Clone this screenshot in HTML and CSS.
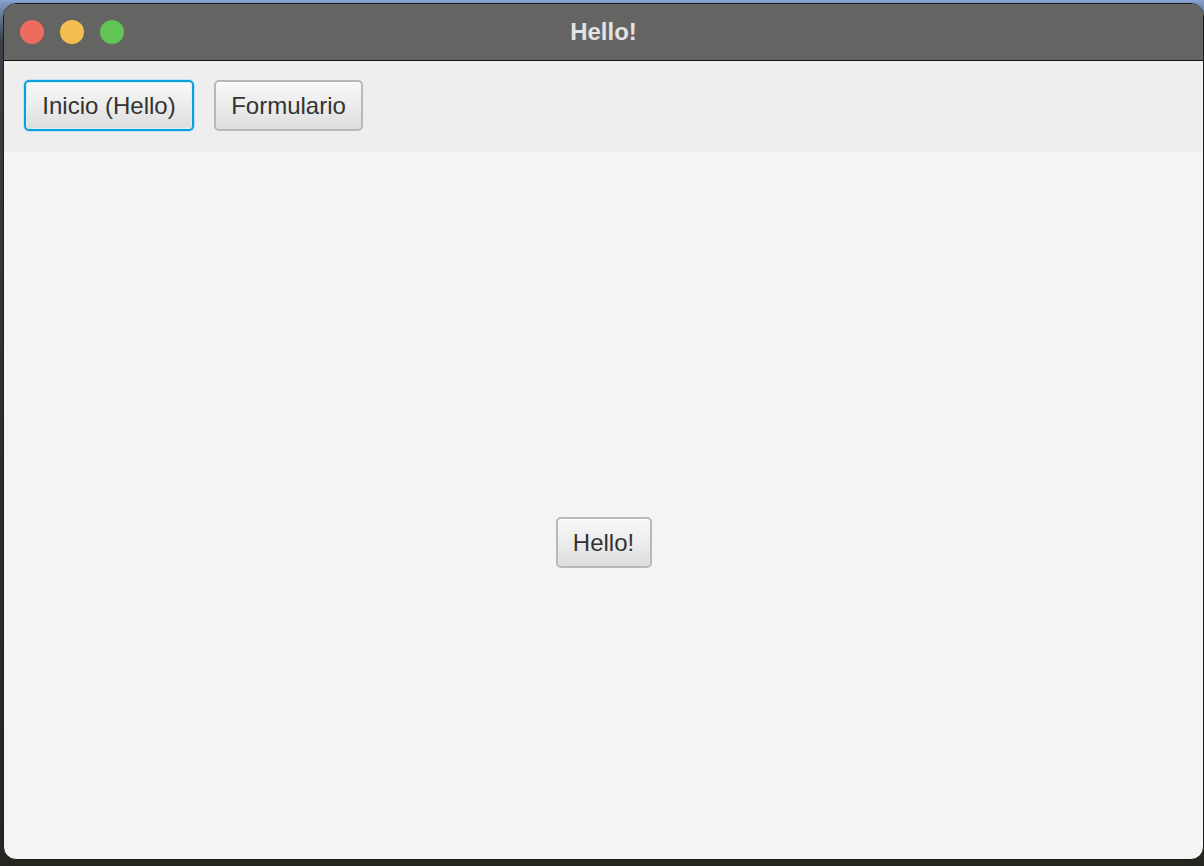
FILE: index.html
```html
<!DOCTYPE html>
<html lang="es">
<head>
<meta charset="utf-8">
<title>Hello!</title>
<link rel="stylesheet" href="styles.css">
</head>
<body>
  <div class="window">
    <header class="titlebar">
      <div class="lights">
        <span class="light red"></span>
        <span class="light yellow"></span>
        <span class="light green"></span>
      </div>
      <div class="title">Hello!</div>
    </header>
    <nav class="toolbar">
      <button class="btn focused">Inicio (Hello)</button>
      <button class="btn btn-form">Formulario</button>
    </nav>
    <main class="content">
      <button class="btn btn-hello">Hello!</button>
    </main>
  </div>
</body>
</html>
```
FILE: styles.css
```css
html, body {
  margin: 0;
  height: 100%;
}

body {
  background:
    linear-gradient(180deg, #8aa6d4 0px, #7f97c0 3px, #3a4046 40px, #2c302c 400px, #23271f 100%);
  padding: 3px 0 0 3px;
  box-sizing: border-box;
  overflow: hidden;
  font-family: "Liberation Sans", Arial, sans-serif;
}

.window {
  width: 1201px;
  height: 857px;
  box-sizing: border-box;
  border: 1px solid #1c1c1c;
  border-radius: 13px;
  overflow: hidden;
  display: flex;
  flex-direction: column;
  background: #f4f4f4;
}

.titlebar {
  height: 56px;
  flex: none;
  background: #646563;
  border-bottom: 1px solid #161616;
  position: relative;
  display: flex;
  align-items: center;
  justify-content: center;
}

.lights {
  position: absolute;
  left: 16px;
  top: 16px;
  display: flex;
  gap: 16px;
}

.light {
  width: 24px;
  height: 24px;
  border-radius: 50%;
}

.light.red { background: #ed6a5e; }
.light.yellow { background: #f5bf4f; }
.light.green { background: #61c554; }

.title {
  color: #e3e3e3;
  font-weight: bold;
  font-size: 24px;
  margin-top: -1px;
}

.toolbar {
  height: 91px;
  flex: none;
  box-sizing: border-box;
  background: #eeeeee;
  padding: 19px 20px 0;
  display: flex;
  align-items: flex-start;
  gap: 20px;
}

.btn {
  font-family: "Liberation Sans", Arial, sans-serif;
  font-size: 24px;
  color: #333333;
  height: 51px;
  padding: 0 16px;
  border: 2px solid #b8b8b8;
  border-radius: 5px;
  background: linear-gradient(180deg, #f8f8f8 0%, #ececec 50%, #dddddd 100%);
  box-shadow: inset 0 1px 0 #ffffff;
  cursor: default;
}

.btn.focused {
  width: 170px;
  padding: 0;
  border-color: #0a9fd9;
  box-shadow: 0 0 0 1px #bfe3f3, inset 0 0 0 1px #d9eef8;
}

.btn.btn-form {
  width: 149px;
  padding: 0;
}

.content {
  flex: 1;
  display: flex;
  flex-direction: column;
  align-items: center;
  padding-top: 365px;
}

.btn.btn-hello {
  width: 96px;
  padding: 0;
}
```
